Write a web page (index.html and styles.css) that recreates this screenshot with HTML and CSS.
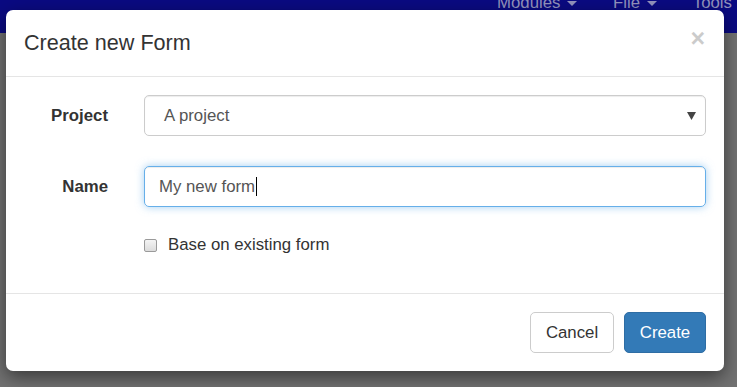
FILE: index.html
```html
<!DOCTYPE html>
<html lang="en">

<head>
  <meta charset="UTF-8">
  <meta name="viewport" content="width=device-width, initial-scale=1.0">
  <title>Create new Form</title>
  <link rel="stylesheet" href="styles.css">
</head>

<body>
  <div class="navbar">
    <ul class="nav">
      <li>Modules <span class="caret"></span></li>
      <li>File <span class="caret"></span></li>
      <li>Tools</li>
    </ul>
  </div>

  <div class="modal">
    <div class="modal-header">
      <h4 class="modal-title">Create new Form</h4>
      <span class="close">&times;</span>
    </div>
    <div class="modal-body">
      <div class="form-row first">
        <label class="control-label">Project</label>
        <div class="field">
          <div class="form-control select">
            <span>A project</span>
            <svg class="arrow" width="9" height="8" viewBox="0 0 9 8">
              <path d="M0 0 L9 0 L4.5 8 Z" fill="#444" />
            </svg>
          </div>
        </div>
      </div>
      <div class="form-row second">
        <label class="control-label">Name</label>
        <div class="field">
          <div class="form-control focused">My new form<span class="cursor"></span></div>
        </div>
      </div>
      <div class="form-row check-row">
        <div class="spacer"></div>
        <label class="checkbox"><span class="box"></span>Base on existing form</label>
      </div>
    </div>
    <div class="modal-footer">
      <button class="btn btn-default">Cancel</button>
      <button class="btn btn-primary">Create</button>
    </div>
  </div>
</body>

</html>
```

FILE: styles.css
```css
* {
  box-sizing: border-box;
}

body {
  margin: 0;
  height: 387px;
  overflow: hidden;
  background: #727272;
  font-family: "Liberation Sans", Arial, sans-serif;
  font-size: 16.8px;
  color: #333;
}

.navbar {
  height: 33px;
  background: #0a0a82;
  overflow: hidden;
}

.nav {
  list-style: none;
  margin: -7px 0 0 0;
  padding: 0;
  display: flex;
  justify-content: flex-end;
  line-height: 20px;
  color: #9393bd;
}

.nav li {
  padding: 0 18px;
  white-space: nowrap;
}

.nav li:last-child {
  padding-right: 5px;
}

.caret {
  display: inline-block;
  width: 0;
  height: 0;
  margin-left: 2px;
  vertical-align: middle;
  border-top: 5px solid #9393bd;
  border-left: 5px solid transparent;
  border-right: 5px solid transparent;
}

.modal {
  position: absolute;
  left: 6px;
  top: 10px;
  width: 718px;
  background: #fff;
  border-radius: 7px;
  box-shadow: 0 6px 18px rgba(0, 0, 0, 0.5);
}

.modal-header {
  display: flex;
  justify-content: space-between;
  align-items: flex-start;
  padding: 18px;
  border-bottom: 1px solid #e5e5e5;
}

.modal-title {
  margin: 0;
  font-size: 21.6px;
  font-weight: normal;
  line-height: 30px;
  color: #333;
}

.close {
  font-size: 25px;
  font-weight: bold;
  line-height: 20px;
  color: #000;
  opacity: 0.2;
  margin-right: 1px;
}

.modal-body {
  padding: 18px 18px 36px 18px;
}

.form-row {
  display: flex;
  align-items: center;
}

.form-row.first {
  margin-bottom: 30px;
}

.form-row.second {
  margin-bottom: 26px;
}

.control-label,
.spacer {
  width: 84px;
  flex-shrink: 0;
  margin-right: 36px;
}

.control-label {
  text-align: right;
  font-weight: bold;
}

.field {
  flex-grow: 1;
}

.form-control {
  height: 41px;
  padding: 0 14px;
  display: flex;
  align-items: center;
  border: 1px solid #ccc;
  border-radius: 5px;
  color: #555;
  box-shadow: inset 0 1px 1px rgba(0, 0, 0, 0.075);
}

.select {
  justify-content: space-between;
  padding: 0 9px 0 19px;
}

.arrow {
  margin-top: 1px;
}

.focused {
  border-color: #66afe9;
  box-shadow: inset 0 1px 1px rgba(0, 0, 0, 0.075), 0 0 8px rgba(102, 175, 233, 0.6);
}

.cursor {
  display: inline-block;
  width: 1px;
  height: 19px;
  background: #000;
  margin-left: 1px;
}

.check-row {
  height: 24px;
}

.checkbox {
  display: flex;
  align-items: center;
  line-height: 24px;
}

.box {
  width: 13px;
  height: 13px;
  margin-right: 11px;
  border: 1px solid #9a9a9a;
  border-radius: 2px;
  background: linear-gradient(#f4f4f4, #dcdcdc);
}

.modal-footer {
  display: flex;
  justify-content: flex-end;
  gap: 10px;
  padding: 18px;
  border-top: 1px solid #e5e5e5;
}

.btn {
  height: 41px;
  padding: 0 14px;
  font-family: inherit;
  font-size: 16.8px;
  border: 1px solid #ccc;
  border-radius: 5px;
}

.btn-default {
  background: #fff;
  color: #333;
  width: 84px;
}

.btn-primary {
  background: #337ab7;
  border-color: #2e6da4;
  color: #fff;
  width: 82px;
}
```
